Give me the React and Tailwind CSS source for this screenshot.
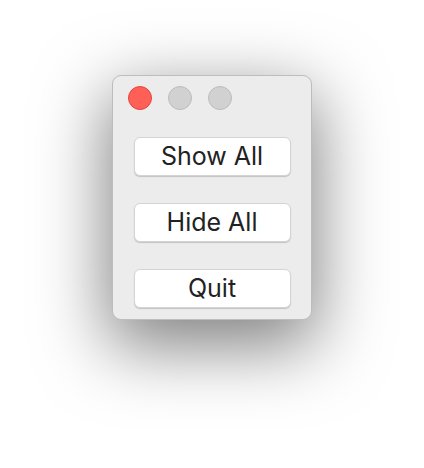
import React from 'react';

function Light({ red }) {
  return (
    <span
      className={
        red
          ? 'block w-6 h-6 rounded-full bg-[#fe5f57] border border-[#e2463f]'
          : 'block w-6 h-6 rounded-full bg-[#d1d1d1] border border-[#bcbcbc]'
      }
    />
  );
}

function MacButton({ children }) {
  return (
    <button className="w-[157px] h-[39px] rounded-[6px] bg-white border border-[#d4d4d4] shadow-[0_1px_1px_rgba(0,0,0,0.18)] text-[25px] leading-none text-[#222] font-['Inter','Liberation_Sans',sans-serif] flex items-center justify-center">
      {children}
    </button>
  );
}

export default function App() {
  return (
    <div className="w-[424px] h-[468px] bg-white flex items-start justify-center pt-[75px]">
      <div className="w-[200px] h-[245px] rounded-[9px] bg-[#ececec] border border-[#bdbdbd] shadow-[0_22px_70px_4px_rgba(0,0,0,0.5)] flex flex-col">
        <div className="flex gap-4 pl-[15px] pt-[10px]">
          <Light red />
          <Light />
          <Light />
        </div>
        <div className="flex flex-col items-center gap-[27px] mt-[27px]">
          <MacButton>Show All</MacButton>
          <MacButton>Hide All</MacButton>
          <MacButton>Quit</MacButton>
        </div>
      </div>
    </div>
  );
}
